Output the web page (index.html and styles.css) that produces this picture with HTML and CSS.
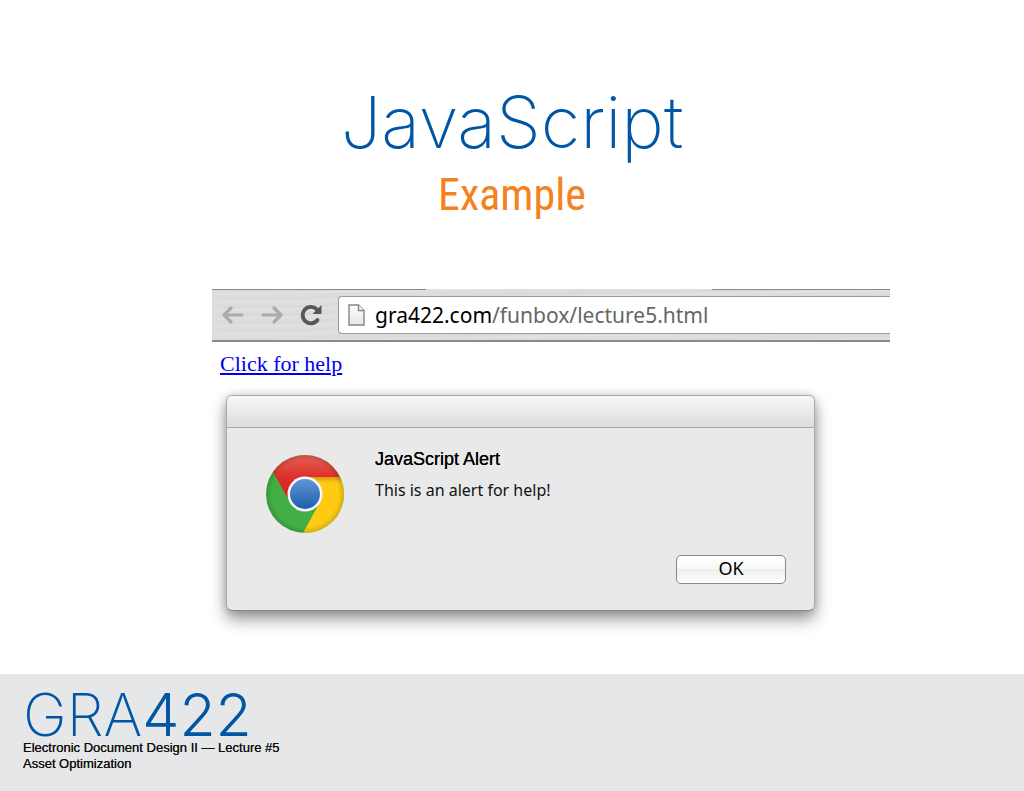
FILE: index.html
```html
<!DOCTYPE html>
<html lang="en">
<head>
<meta charset="utf-8">
<meta name="viewport" content="width=device-width, initial-scale=1">
<title>JavaScript Example</title>
<link rel="stylesheet" href="styles.css">
</head>
<body>
<main class="slide">
  <header class="heading">
    <h1 class="title">JavaScript</h1>
    <h2 class="subtitle">Example</h2>
  </header>
  <section class="demo">
    <div class="toolbar">
      <div class="edge"><span class="edge-left"></span><span class="edge-right"></span></div>
      <div class="controls">
        <button class="nav" aria-label="Back"><svg width="24" height="22" viewBox="0 0 24 22"><path d="M10 4 3 11l7 7M4 11h17" fill="none" stroke="#ababab" stroke-width="3.2" stroke-linecap="round" stroke-linejoin="round"/></svg></button>
        <button class="nav" aria-label="Forward"><svg width="24" height="22" viewBox="0 0 24 22"><path d="m14 4 7 7-7 7M20 11H3" fill="none" stroke="#ababab" stroke-width="3.2" stroke-linecap="round" stroke-linejoin="round"/></svg></button>
        <button class="nav" aria-label="Reload"><svg width="24" height="22" viewBox="0 0 24 22"><path d="M18.500 16A8.200 8.200 0 1 1 17.800 5.400" fill="none" stroke="#575757" stroke-width="3.800" stroke-linecap="round"/><path d="M22.500 1v9h-9z" fill="#575757"/></svg></button>
        <div class="address">
          <svg class="page-icon" width="17" height="22" viewBox="0 0 17 22"><defs><linearGradient id="page" x2="0" y2="1"><stop stop-color="#fff"/><stop offset="1" stop-color="#e6e6e6"/></linearGradient></defs><path d="M1 1h9.500L16 6.500V21H1z" fill="url(#page)" stroke="#858585" stroke-width="1.400"/><path d="M10.500 1v5.500H16" fill="#fff" stroke="#858585" stroke-width="1.400"/></svg>
          <span class="url">gra422.com<span class="path">/funbox/lecture5.html</span></span>
        </div>
      </div>
    </div>
    <a class="help" href="#alert">Click for help</a>
    <div class="alert" id="alert" role="alertdialog" aria-labelledby="alert-title">
      <div class="titlebar"></div>
      <div class="content">
        <svg class="logo" width="84" height="84" viewBox="-42 -42 84 84" aria-hidden="true">
          <defs>
            <linearGradient id="red" x2="0" y2="1"><stop stop-color="#e8695c"/><stop offset=".5" stop-color="#dc3029"/><stop offset="1" stop-color="#d71920"/></linearGradient>
            <linearGradient id="blue" x2="0" y2="1"><stop stop-color="#6096d2"/><stop offset="1" stop-color="#1c5fae"/></linearGradient>
            <linearGradient id="shade" x2="0" y2="1"><stop stop-color="#8a1010" stop-opacity=".3"/><stop offset="1" stop-color="#c98a00" stop-opacity="0"/></linearGradient>
            <radialGradient id="rim"><stop offset=".85" stop-color="#000" stop-opacity="0"/><stop offset="1" stop-color="#000" stop-opacity=".15"/></radialGradient>
            <clipPath id="disc"><circle r="39"/></clipPath>
          </defs>
          <g clip-path="url(#disc)">
            <rect x="-40" y="-40" width="80" height="80" fill="#42ae45"/>
            <path d="M0-17H42V42H-3L-2 39 15 8z" fill="#fecb12"/>
            <path d="M-32-22-40-42H42V-17H0L-15 8z" fill="url(#red)"/>
            <path d="M0-17H39V-10H8z" fill="url(#shade)"/>
            <circle r="39" fill="url(#rim)"/>
          </g>
          <circle r="17.500" fill="#f5f7fa"/>
          <circle r="15" fill="url(#blue)"/>
        </svg>
        <div class="message">
          <h3 class="alert-title" id="alert-title">JavaScript Alert</h3>
          <p class="alert-text">This is an alert for help!</p>
        </div>
      </div>
      <div class="actions"><button class="ok">OK</button></div>
    </div>
  </section>
</main>
<footer class="footer">
  <div class="course">GRA<span class="number">422</span></div>
  <p class="details">Electronic Document Design II — Lecture #5<br>Asset Optimization</p>
</footer>
</body>
</html>
```
FILE: styles.css
```css
* { box-sizing: border-box; }
body {
  margin: 0;
  min-height: 100vh;
  display: flex;
  flex-direction: column;
  background: #fff;
  color: #111;
  font-family: Inter, "Liberation Sans", sans-serif;
}
h1, h2, h3, p { margin: 0; }
.slide { flex: 1; padding-top: 72px; }
.heading { text-align: center; }
.title { font-size: 72px; line-height: 100px; font-weight: 200; color: #0055a5; }
.subtitle {
  font-family: "Liberation Sans Narrow", "Roboto Condensed", "Liberation Sans", sans-serif;
  font-size: 44px;
  line-height: 46px;
  font-weight: 400;
  color: #f58220;
}
.demo { width: 678px; max-width: 100%; margin: 71px 134px 0 auto; }
.toolbar {
  background: repeating-linear-gradient(179deg, #dedede 0, #d9d9d9 3px, #e1e1e1 5px, #dbdbdb 8px);
  border-bottom: 2px solid #8b8b8b;
}
.edge { display: flex; justify-content: space-between; height: 7px; }
.edge-left, .edge-right { border-top: 1px solid #888; }
.edge-left { width: 214px; }
.edge-right { width: 178px; }
.controls { display: flex; align-items: center; gap: 15px; padding: 0 0 6px 9px; }
.nav { display: flex; padding: 0; border: 0; background: none; }
.address {
  flex: 1;
  display: flex;
  align-items: center;
  gap: 10px;
  height: 38px;
  padding-left: 9px;
  background: #fff;
  border: 1px solid #999;
  border-right: 0;
  border-radius: 4px 0 0 4px;
}
.url { font-family: "Noto Sans", sans-serif; font-size: 21px; line-height: 28px; color: #000; }
.path { color: #666; }
.help {
  display: inline-block;
  margin: 9px 0 0 8px;
  font-family: "Liberation Serif", serif;
  font-size: 22px;
  line-height: 26px;
  color: #00e;
}
.alert {
  width: 589px;
  max-width: 100%;
  margin: 18px 0 0 14px;
  background: #e9e9e9;
  border: 1px solid #aaa;
  border-bottom-color: #888;
  border-radius: 6px;
  box-shadow: 0 8px 16px rgba(0, 0, 0, .42), 0 0 8px rgba(0, 0, 0, .14);
}
.titlebar {
  height: 32px;
  border-bottom: 1px solid #aaa;
  border-radius: 5px 5px 0 0;
  background: linear-gradient(#f8f8f8, #dcdcdc);
}
.content { display: flex; gap: 28px; padding: 24px 36px 0; }
.alert-title { font-family: "Liberation Sans", sans-serif; font-size: 18px; line-height: 14px; font-weight: 400; color: #000; text-shadow: 0 0 0 #000; }
.alert-text { margin-top: 14px; font-family: "Noto Sans", sans-serif; font-size: 16px; line-height: 20px; }
.actions { display: flex; justify-content: flex-end; padding: 19px 28px 26px; }
.ok {
  width: 110px;
  height: 29px;
  padding: 0 0 3px;
  border: 1px solid #888;
  border-radius: 5px;
  background: linear-gradient(#fff, #f7f7f7 50%, #eee 50%, #fff);
  font-family: "Noto Sans", sans-serif;
  font-size: 18px;
  line-height: 24px;
  color: #000;
}
.footer { min-height: 117px; padding: 12px 23px; background: #e6e7e8; }
.course { height: 54px; font-size: 59px; line-height: 58px; font-weight: 200; color: #0055a5; }
.number { font-weight: 300; }
.details { font-family: "Liberation Sans", sans-serif; font-size: 13px; line-height: 16px; font-weight: 400; text-shadow: 0 0 0 #111; }
```
